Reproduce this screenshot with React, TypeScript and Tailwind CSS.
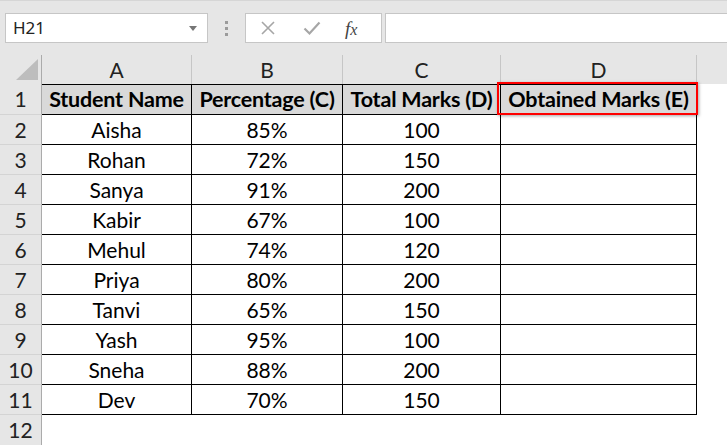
import React from "react";

const rows = [
  ["Aisha", "85%", "100"],
  ["Rohan", "72%", "150"],
  ["Sanya", "91%", "200"],
  ["Kabir", "67%", "100"],
  ["Mehul", "74%", "120"],
  ["Priya", "80%", "200"],
  ["Tanvi", "65%", "150"],
  ["Yash", "95%", "100"],
  ["Sneha", "88%", "200"],
  ["Dev", "70%", "150"],
];

const font = { fontFamily: "Lato, 'Noto Sans', sans-serif" };

function RowHead({ n, last }: { n: number; last?: boolean }) {
  return (
    <div
      className={
        "w-[42px] shrink-0 flex items-center justify-center bg-[#e6e6e6] border-r border-[#ababab] text-[21px] text-[#222] " +
        (last ? "" : "border-b border-b-[#d4d4d4]")
      }
    >
      {n}
    </div>
  );
}

function Toolbar() {
  return (
    <div className="h-[55px] bg-[#e6e6e6] border-t border-[#d6d6d6] flex items-start pt-[12px] pl-[5px]">
      <div className="w-[203px] h-[30px] bg-white border border-[#c6c6c6] flex items-center justify-between pl-[7px] pr-[10px]">
        <span className="text-[17px] text-[#222]" style={{ fontFamily: "'Noto Sans', sans-serif" }}>
          H21
        </span>
        <svg width="8" height="5" viewBox="0 0 8 5">
          <path d="M0 0h8L4 5z" fill="#767676" />
        </svg>
      </div>
      <div className="w-[37px] h-[30px] flex flex-col items-center justify-center gap-[3px]">
        <span className="w-[3px] h-[3px] bg-[#9b9b9b]" />
        <span className="w-[3px] h-[3px] bg-[#9b9b9b]" />
        <span className="w-[3px] h-[3px] bg-[#9b9b9b]" />
      </div>
      <div className="w-[137px] h-[30px] bg-white border border-[#c6c6c6] flex items-center pl-[14px] gap-[27px]">
        <svg width="16" height="16" viewBox="0 0 16 16">
          <path d="M2 2L14 14M14 2L2 14" stroke="#a6a6a6" strokeWidth="1.6" />
        </svg>
        <svg width="18" height="16" viewBox="0 0 18 16">
          <path d="M1.5 8.5L6.5 13.5L16.5 2.5" stroke="#a6a6a6" strokeWidth="2.2" fill="none" />
        </svg>
        <span
          className="text-[19px] italic text-[#444] -ml-[3px] leading-none"
          style={{ fontFamily: "'Liberation Serif', serif" }}
        >
          f<span className="text-[16px]">x</span>
        </span>
      </div>
      <div className="ml-[3px] flex-1 h-[30px] bg-white border border-[#c6c6c6] border-r-0" />
    </div>
  );
}

export default function App() {
  const widths = ["w-[150px]", "w-[151px]", "w-[158px]", "w-[196px]"];
  return (
    <div className="w-[727px] h-[445px] bg-white overflow-hidden relative" style={font}>
      <Toolbar />
      {/* column headers */}
      <div className="h-[29px] flex bg-[#e6e6e6]">
        <div className="w-[42px] shrink-0 relative border-r border-[#ababab]">
          <svg className="absolute left-[16px] top-[4px]" width="23" height="22" viewBox="0 0 23 22">
            <path d="M0 21L22 21L22 0z" fill="#bdbdbd" />
          </svg>
        </div>
        {["A", "B", "C", "D"].map((c, i) => (
          <div
            key={c}
            className={
              widths[i] +
              " shrink-0 flex items-center justify-center border-r border-[#c6c6c6] text-[21px] text-[#222] pt-[1px]"
            }
          >
            {c}
          </div>
        ))}
        <div className="flex-1" />
      </div>
      {/* row 1 */}
      <div className="h-[31px] flex">
        <RowHead n={1} />
        {["Student Name", "Percentage (C)", "Total Marks (D)", "Obtained Marks (E)"].map((t, i) => (
          <div
            key={t}
            className={
              widths[i] +
              " shrink-0 flex items-center justify-center bg-[#d9d9d9] border-t border-b border-r border-black text-[21.5px] font-bold text-black whitespace-nowrap tracking-[-0.2px]"
            }
          >
            {t}
          </div>
        ))}
      </div>
      {rows.map((r, ri) => (
        <div key={ri} className="h-[30px] flex">
          <RowHead n={ri + 2} />
          {[...r, ""].map((t, i) => (
            <div
              key={i}
              className={
                widths[i] +
                " shrink-0 flex items-center justify-center border-b border-r border-black text-[21px] text-black"
              }
            >
              {t}
            </div>
          ))}
        </div>
      ))}
      <div className="h-[30px] flex">
        <RowHead n={12} last />
      </div>
      {/* selection outline on D1 */}
      <div className="absolute left-[497px] top-[82px] w-[201px] h-[33px] border-2 border-[#ff0000] shadow-[1px_1px_3px_rgba(0,0,0,0.35)]" />
    </div>
  );
}
